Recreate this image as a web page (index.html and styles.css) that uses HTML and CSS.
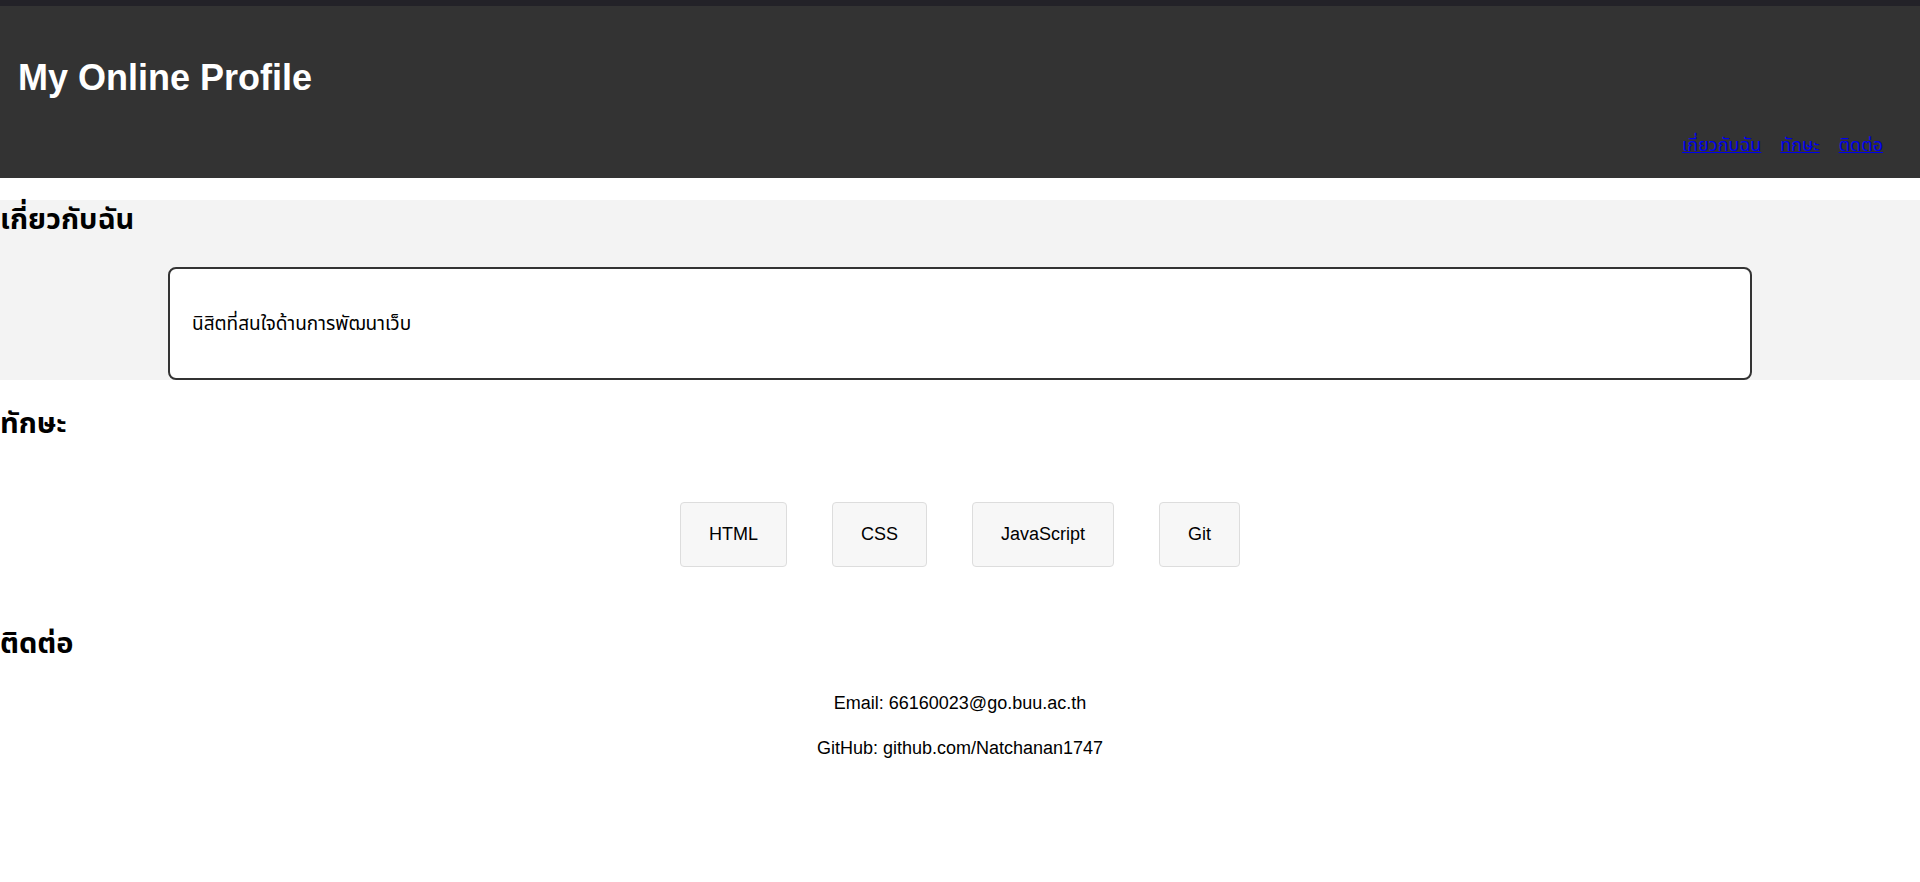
FILE: index.html
```html
<!DOCTYPE html>
<html lang="th">
<head>
<meta charset="utf-8">
<title>My Online Profile</title>
<link rel="stylesheet" href="styles.css">
</head>
<body>
<header class="site-header">
  <h1 class="site-title">My Online Profile</h1>
  <nav class="site-nav">
    <a href="#about">เกี่ยวกับฉัน</a>
    <a href="#skills">ทักษะ</a>
    <a href="#contact">ติดต่อ</a>
  </nav>
</header>
<main>
  <section class="about" id="about">
    <h2 class="section-title">เกี่ยวกับฉัน</h2>
    <div class="about-card">
      <p class="about-text">นิสิตที่สนใจด้านการพัฒนาเว็บ</p>
    </div>
  </section>
  <section class="skills" id="skills">
    <h2 class="section-title">ทักษะ</h2>
    <ul class="skill-list">
      <li class="skill">HTML</li>
      <li class="skill">CSS</li>
      <li class="skill">JavaScript</li>
      <li class="skill">Git</li>
    </ul>
  </section>
  <section class="contact" id="contact">
    <h2 class="section-title">ติดต่อ</h2>
    <p class="contact-line">Email: 66160023@go.buu.ac.th</p>
    <p class="contact-line">GitHub: github.com/Natchanan1747</p>
  </section>
</main>
</body>
</html>
```

FILE: styles.css
```css
body {
  margin: 0;
  font-family: "Liberation Sans", Arial, Tahoma, "Noto Sans Thai", sans-serif;
  font-size: 18px;
  color: #000;
  background: #fff;
}

.site-header {
  background: #333333;
  border-top: 6px solid #232228;
  color: #fff;
  padding: 52px 37px 21px 18px;
}

.site-title {
  margin: 0;
  font-size: 36px;
  line-height: 40px;
  font-weight: bold;
}

.site-nav {
  margin-top: 35px;
  display: flex;
  justify-content: flex-end;
  gap: 19px;
  line-height: 24px;
  font-size: 18px;
}

.site-nav a {
  color: #0000ee;
  text-decoration: underline;
}

.section-title {
  margin: 0;
  padding-top: 1px;
  font-size: 29px;
  line-height: 36px;
  font-weight: bold;
}

.about {
  margin-top: 22px;
  background: #f3f3f3;
}

.about .section-title {
  margin-bottom: 30px;
}

.about-card {
  width: 82.5%;
  box-sizing: border-box;
  margin: 0 auto;
  background: #fff;
  border: 2px solid #333;
  border-radius: 8px;
  padding: 24px 22px;
}

.about-text {
  margin: 16px 0;
  font-size: 19px;
  line-height: 29px;
}

.skills {
  padding-top: 24px;
}

.skill-list {
  list-style: none;
  margin: 61px 0 0;
  padding: 0;
  text-align: center;
}

.skill {
  display: inline-block;
  margin: 0 20px;
  padding: 21px 28px;
  background: #f7f7f7;
  border: 1px solid #dddddd;
  border-radius: 4px;
  line-height: 21px;
}

.contact {
  padding-top: 57px;
  text-align: center;
}

.contact .section-title {
  text-align: left;
  margin-bottom: 28px;
}

.contact-line {
  margin: 16px 0;
  line-height: 29px;
}
```
